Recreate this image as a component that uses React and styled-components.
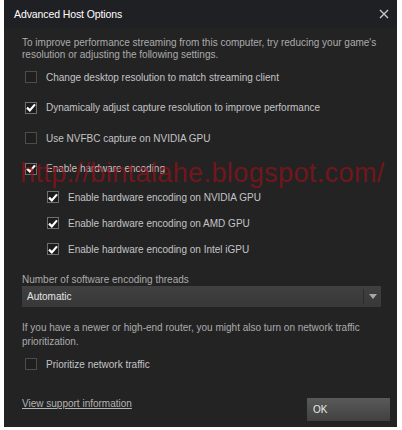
import React from "react";
import styled, { createGlobalStyle } from "styled-components";

const Global = createGlobalStyle`
  html, body { margin: 0; padding: 0; background: #ffffff; }
  body { font-family: "Liberation Sans", Arial, sans-serif; }
`;

const Dialog = styled.div`
  position: relative;
  width: 393px;
  height: 427px;
  margin-left: 4px;
  background: #232324;
  display: flex;
  flex-direction: column;
  overflow: hidden;
`;

const TitleBar = styled.div`
  flex-shrink: 0;
  height: 28px;
  display: flex;
  align-items: center;
  justify-content: space-between;
  padding: 0 8px 0 10px;
  background: #1f2024;
`;

const Title = styled.div`
  color: #ffffff;
  font-size: 10.5px;
  font-weight: 400;
  letter-spacing: -0.1px;
`;

const Close = styled.svg`
  width: 10px;
  height: 10px;
`;

const Body = styled.div`
  display: flex;
  flex-direction: column;
  padding: 9px 7px 0 18px;
  flex: 1;
`;

const Para = styled.p`
  margin: ${(p) => p.$top || 0}px 0 0 0;
  color: #ababab;
  font-size: 10px;
  line-height: ${(p) => p.$lh || 12}px;
  white-space: nowrap;
`;

const Options = styled.div`
  display: flex;
  flex-direction: column;
  margin-top: ${(p) => p.$top || 0}px;
`;

const Row = styled.label`
  display: flex;
  align-items: center;
  height: ${(p) => (p.$sub ? 26 : 30.5)}px;
  padding-left: ${(p) => (p.$sub ? 25 : 3)}px;
  gap: 9px;
  color: #c4c4c4;
  font-size: 10px;
  white-space: nowrap;
`;

const Box = styled.span`
  width: 10px;
  height: 10px;
  border: 1px solid ${(p) => (p.$checked ? "#6f6f6f" : "#4c4c4c")};
  background: ${(p) => (p.$checked ? "#1c1c1c" : "#1f1f1f")};
  display: flex;
  align-items: center;
  justify-content: center;
  flex-shrink: 0;
`;

const SectionLabel = styled.div`
  color: #ababab;
  font-size: 10px;
  line-height: 12px;
  margin-top: 12px;
`;

const Select = styled.div`
  width: 359px;
  height: 21px;
  display: flex;
  align-items: center;
  background: linear-gradient(#404040, #383838);
  color: #e4e4e4;
  font-size: 10px;
`;

const SelectValue = styled.div`
  flex: 1;
  padding-left: 5px;
`;

const SelectDivider = styled.div`
  width: 1px;
  height: 15px;
  background: #2c2c2c;
`;

const SelectArrow = styled.div`
  width: 17px;
  display: flex;
  justify-content: center;
`;

const Footer = styled.div`
  margin-top: auto;
  display: flex;
  justify-content: space-between;
  align-items: center;
  padding: 0 0 6px 0;
`;

const Link = styled.a`
  color: #b4b4b4;
  font-size: 10px;
  text-decoration: underline;
  margin-top: -12px;
`;

const OkButton = styled.button`
  width: 83px;
  height: 23px;
  border: none;
  padding: 0 0 0 6px;
  text-align: left;
  color: #e8e8e8;
  font-family: "Liberation Sans", Arial, sans-serif;
  font-size: 10px;
  background: linear-gradient(#595959, #414141);
`;

const Watermark = styled.div`
  position: absolute;
  left: 16px;
  top: 158px;
  color: rgba(145, 18, 24, 0.72);
  font-size: 27px;
  letter-spacing: 0.4px;
  pointer-events: none;
  white-space: nowrap;
`;

const Check = () => (
  <svg width="10" height="9" viewBox="0 0 10 9">
    <path d="M1 4.6 L3.8 7.4 L9 1.4" stroke="#ffffff" strokeWidth="2.2" fill="none" />
  </svg>
);

const Option = ({ checked, sub, children }) => (
  <Row $sub={sub}>
    <Box $checked={checked}>{checked && <Check />}</Box>
    {children}
  </Row>
);

export default function App() {
  return (
    <>
      <Global />
      <Dialog>
        <TitleBar>
          <Title>Advanced Host Options</Title>
          <Close viewBox="0 0 10 10">
            <path d="M1 1 L9 9 M9 1 L1 9" stroke="#c8c8c8" strokeWidth="1.4" />
          </Close>
        </TitleBar>
        <Body>
          <Para>
            To improve performance streaming from this computer, try reducing your game's
            <br />
            resolution or adjusting the following settings.
          </Para>
          <Options $top={1}>
            <Option>Change desktop resolution to match streaming client</Option>
            <Option checked>Dynamically adjust capture resolution to improve performance</Option>
            <Option>Use NVFBC capture on NVIDIA GPU</Option>
            <Option checked>Enable hardware encoding</Option>
            <Option checked sub>Enable hardware encoding on NVIDIA GPU</Option>
            <Option checked sub>Enable hardware encoding on AMD GPU</Option>
            <Option checked sub>Enable hardware encoding on Intel iGPU</Option>
          </Options>
          <SectionLabel>Number of software encoding threads</SectionLabel>
          <Select>
            <SelectValue>Automatic</SelectValue>
            <SelectDivider />
            <SelectArrow>
              <svg width="8" height="5" viewBox="0 0 8 5">
                <path d="M0 0 H8 L4 5 Z" fill="#a8a8a8" />
              </svg>
            </SelectArrow>
          </Select>
          <Para $top={14} $lh={14}>
            If you have a newer or high-end router, you might also turn on network traffic
            <br />
            prioritization.
          </Para>
          <Options>
            <Option>Prioritize network traffic</Option>
          </Options>
          <Footer>
            <Link>View support information</Link>
            <OkButton>OK</OkButton>
          </Footer>
        </Body>
        <Watermark>http://bintalahe.blogspot.com/</Watermark>
      </Dialog>
    </>
  );
}
